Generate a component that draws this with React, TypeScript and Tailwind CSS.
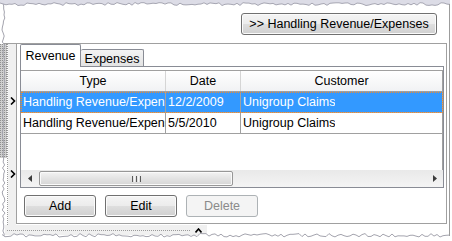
import React from "react";

const rnd = (i: number, s: number) => {
  const v = Math.sin(i * 12.9898 + s * 78.233) * 43758.5453;
  return v - Math.floor(v);
};

const TornEdges = () => {
  const top: string[] = [];
  for (let x = 0; x <= 453; x += 3) top.push(`${x},${(2.5 + rnd(x, 1) * 3).toFixed(1)}`);
  const left: string[] = [];
  for (let y = 3; y <= 240; y += 3) left.push(`${(2 + rnd(y, 2) * 3).toFixed(1)},${y}`);
  const bottom: string[] = [];
  for (let x = 2; x <= 452; x += 3) bottom.push(`${x},${(233.5 + rnd(x, 3) * 3.5).toFixed(1)}`);

  return (
    <svg className="absolute inset-0 pointer-events-none" width={452} height={241}>
      <defs>
        <pattern id="grip" width="2" height="2" patternUnits="userSpaceOnUse">
          <rect width="2" height="2" fill="#cfcfcf" />
          <rect width="1" height="1" fill="#8f8f8f" />
        </pattern>
      </defs>
      <path d={`M0,0 L${left.join(" L")} L0,241 Z`} fill="#ffffff" />
      <rect x={0} y={44} width={7} height={114} fill="url(#grip)" />
      <polyline points={left.join(" ")} fill="none" stroke="#a4a4ae" strokeWidth={1} />
      <path d={`M0,0 L${top.join(" L")} L452,0 Z`} fill="#dcdce6" />
      <polyline points={top.join(" ")} fill="none" stroke="#a6a6b2" strokeWidth={1} />
      <path d={`M0,241 L${bottom.join(" L")} L452,241 Z`} fill="#ffffff" />
      <polyline points={bottom.join(" ")} fill="none" stroke="#a4a4ae" strokeWidth={1} />
      <rect x={450} y={0} width={2} height={241} fill="#ffffff" />
      <line x1={449.5} y1={4} x2={449.5} y2={236} stroke="#9c9c9c" />
    </svg>
  );
};

type BtnProps = {
  children: React.ReactNode;
  disabled?: boolean;
  className?: string;
};

const Btn: React.FC<BtnProps> = ({ children, disabled, className }) => (
  <div
    className={`flex items-center justify-center rounded-[3px] border leading-none ${
      disabled
        ? "border-[#adb2b5] bg-[#f4f4f4] text-[#8a8a8a]"
        : "border-[#707070] bg-[linear-gradient(to_bottom,#f4f4f4_0%,#ececec_48%,#dedede_52%,#d0d0d0_100%)] text-black shadow-[inset_0_0_0_1px_#fbfbfb]"
    } ${className ?? ""}`}
  >
    {children}
  </div>
);

const Chevron = () => (
  <svg width="6" height="8" viewBox="0 0 6 8">
    <path d="M1 0.5 L4.5 4 L1 7.5" fill="none" stroke="#000" strokeWidth={1.6} />
  </svg>
);

const cols = [
  { label: "Type", w: "w-[145px]" },
  { label: "Date", w: "w-[75px]" },
  { label: "Customer", w: "flex-1" },
];

const rows = [
  ["Handling Revenue/Expenses", "12/2/2009", "Unigroup Claims"],
  ["Handling Revenue/Expenses", "5/5/2010", "Unigroup Claims"],
];

const ScrollBar = () => (
  <div className="h-[17px] flex items-center bg-[linear-gradient(to_bottom,#e9e9e9,#f4f4f4)]">
    <div className="w-[17px] h-full flex items-center justify-center">
      <svg width="4" height="7" viewBox="0 0 4 7">
        <path d="M4 0 L0 3.5 L4 7 Z" fill="#3c3c3c" />
      </svg>
    </div>
    <div className="ml-[1px] w-[194px] h-[15px] rounded-[2px] border border-[#979797] bg-[linear-gradient(to_bottom,#f3f3f3,#e3e3e3_50%,#d6d6d6)] shadow-[inset_0_0_0_1px_#fafafa] flex items-center justify-center gap-[1px]">
      <div className="w-[1px] h-[6px] bg-[#5a5a5a]" />
      <div className="w-[1px] h-[6px] bg-[#f5f5f5]" />
      <div className="w-[1px] h-[6px] bg-[#5a5a5a]" />
      <div className="w-[1px] h-[6px] bg-[#f5f5f5]" />
      <div className="w-[1px] h-[6px] bg-[#5a5a5a]" />
    </div>
    <div className="flex-1" />
    <div className="w-[17px] h-full flex items-center justify-center">
      <svg width="4" height="7" viewBox="0 0 4 7">
        <path d="M0 0 L4 3.5 L0 7 Z" fill="#3c3c3c" />
      </svg>
    </div>
  </div>
);

const Grid = () => (
  <div className="h-full flex flex-col border-t border-[#a0a0a0]">
    <div className="flex h-[21px] border-b border-[#a0a0a0] bg-[linear-gradient(to_bottom,#ffffff,#f1f2f4)]">
      {cols.map((c) => (
        <div
          key={c.label}
          className={`${c.w} h-full flex items-center justify-center border-r border-[#d5d5d5] last:border-[#a0a0a0]`}
        >
          {c.label}
        </div>
      ))}
    </div>
    {rows.map((r, i) => (
      <div
        key={i}
        className={`relative flex h-[21px] border-b border-[#a0a0a0] ${
          i === 0 ? "bg-[#3399ff] text-white" : "bg-white text-black"
        }`}
      >
        {r.map((cell, j) => (
          <div
            key={j}
            className={`${cols[j].w} h-full flex items-center pl-[2px] overflow-hidden whitespace-nowrap border-r border-[#a0a0a0]`}
          >
            <span className="block overflow-hidden">{cell}</span>
          </div>
        ))}
        {i === 0 && (
          <div className="absolute inset-0 -bottom-[1px] border border-dotted border-[#f08a2c]" />
        )}
      </div>
    ))}
    <div className="flex-1 bg-white border-r border-[#a0a0a0]" />
    <ScrollBar />
  </div>
);

export default function App() {
  return (
    <div className="relative w-[452px] h-[241px] overflow-hidden bg-white font-['Liberation_Sans',Arial,sans-serif] text-[12.5px] text-black">
      <div className="h-[43px] pt-[13px] pr-[15px] flex justify-end">
        <Btn className="w-[196px] h-[22px]">&gt;&gt; Handling Revenue/Expenses</Btn>
      </div>

      <div className="w-[447px] h-[182px] flex border-t border-[#a0a0a0]">
        {/* splitter */}
        <div className="w-[16px] flex">
          <div className="w-[8px] border-r border-dotted border-[#9a9a9a]" />
          <div className="w-[8px] bg-[#f0f0f0] flex flex-col pl-[2px] pt-[53px] gap-[65px]">
            <Chevron />
            <Chevron />
          </div>
        </div>

        {/* panel */}
        <div className="w-[431px] h-[180px] border-l border-r border-b border-[#a0a0a0] bg-white flex flex-col">
          <div className="h-[22px] ml-[3px] flex items-start">
            <div className="relative z-10 w-[61px] h-[23px] flex justify-center pt-[4px] leading-[14px] bg-white border-t border-l border-r border-[#898c95] rounded-t-[2px]">
              Revenue
            </div>
            <div className="mt-[5px] w-[63px] h-[17px] flex justify-center pt-[2px] leading-[14px] border-t border-r border-[#898c95] rounded-t-[2px] bg-[linear-gradient(to_bottom,#f3f3f3,#e3e3e3)]">
              Expenses
            </div>
          </div>

          <div className="ml-[3px] w-[424px] h-[122px] border border-[#898c95] pt-[3px] bg-white">
            <Grid />
          </div>

          <div className="mt-[7px] ml-[7px] flex gap-[9px]">
            <Btn className="w-[72px] h-[22px]">Add</Btn>
            <Btn className="w-[72px] h-[22px]">Edit</Btn>
            <Btn className="w-[72px] h-[22px]" disabled>
              Delete
            </Btn>
          </div>
        </div>
      </div>

      {/* bottom splitter */}
      <div className="ml-[5px] w-[202px] h-[10px] bg-[#f0f0f0] flex items-center">
        <div className="ml-[2px] w-[183px] border-t border-dotted border-[#9a9a9a]" />
        <svg className="ml-[5px]" width="7" height="5" viewBox="0 0 7 5">
          <path d="M0.5 4.5 L3.5 1 L6.5 4.5" fill="none" stroke="#000" strokeWidth={1.6} />
        </svg>
      </div>

      <TornEdges />
    </div>
  );
}
